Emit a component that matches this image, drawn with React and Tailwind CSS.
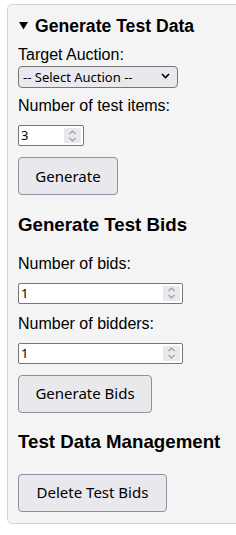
import { useState } from "react";

const sans = "font-['Liberation_Sans',Arial,sans-serif]";
const ui = "font-['Noto_Sans','Open_Sans',sans-serif]";

function NumberField({ value, onChange, width }) {
  return (
    <div
      className={`mt-[10px] flex h-[21px] items-stretch rounded-[2px] border border-[#767676] bg-white ${width}`}
    >
      <input
        type="text"
        value={value}
        onChange={(e) => onChange(e.target.value)}
        className={`${ui} min-w-0 flex-1 bg-transparent px-[2px] text-[13px] leading-[19px] text-black outline-none`}
      />
      {/* spinner */}
      <div className="my-[2px] mr-[2px] flex w-[17px] flex-col items-center justify-center bg-[#e9e9ed]">
        <svg width="9" height="14" viewBox="0 0 9 14" fill="none" stroke="#9a9aa6" strokeWidth="1.1">
          <path d="M1.5 5 L4.5 2 L7.5 5" />
          <path d="M1.5 9 L4.5 12 L7.5 9" />
        </svg>
      </div>
    </div>
  );
}

function Btn({ children, className = "" }) {
  return (
    <button
      className={`${ui} flex h-[38px] items-center justify-center whitespace-nowrap rounded-[4px] border border-[#8f8f9d] bg-[#e9e9ed] text-[15px] text-black ${className}`}
    >
      {children}
    </button>
  );
}

export default function App() {
  const [items, setItems] = useState("3");
  const [bids, setBids] = useState("1");
  const [bidders, setBidders] = useState("1");
  const [auction, setAuction] = useState("");

  return (
    <div className={`h-[535px] w-[236px] overflow-hidden bg-white pl-[7px] pt-[4px] ${sans}`}>
      <div className="w-[260px] rounded-[5px] border border-[#d6d6d6] bg-[#f4f4f4] pl-[10px] pt-[11px] pb-[11px] text-black">
        {/* Generate Test Data */}
        <div className="flex items-center text-[17.6px] font-bold leading-[20px]">
          <svg width="9" height="8" viewBox="0 0 9 8" className="ml-[1px] mr-[7px]">
            <polygon points="0,0 9,0 4.5,7.5" fill="#000" />
          </svg>
          Generate Test Data
        </div>

        <label className="mt-[10px] block text-[16px] leading-[18px]">Target Auction:</label>
        <div className="relative mt-[1px] h-[22px] w-[160px]">
          <select
            value={auction}
            onChange={(e) => setAuction(e.target.value)}
            className={`${ui} h-full w-full appearance-none rounded-[4px] border border-[#767676] bg-[#e9e9ed] pl-[4px] text-[13px] leading-[20px] text-black outline-none`}
          >
            <option value="">-- Select Auction --</option>
          </select>
          <svg
            width="9"
            height="6"
            viewBox="0 0 9 6"
            className="pointer-events-none absolute right-[8px] top-[8px]"
            fill="none"
            stroke="#000"
            strokeWidth="1.6"
          >
            <path d="M1 1 L4.5 4.5 L8 1" />
          </svg>
        </div>

        <label className="mt-[10px] block text-[16px] leading-[18px]">Number of test items:</label>
        <NumberField value={items} onChange={setItems} width="w-[66px]" />
        <Btn className="mt-[11px] w-[100px]">Generate</Btn>

        {/* Generate Test Bids */}
        <h3 className="mt-[18.5px] text-[18.72px] font-bold leading-[22px]">Generate Test Bids</h3>
        <label className="mt-[19px] block text-[16px] leading-[18px]">Number of bids:</label>
        <NumberField value={bids} onChange={setBids} width="w-[165px]" />
        <label className="mt-[11px] block text-[16px] leading-[18px]">Number of bidders:</label>
        <NumberField value={bidders} onChange={setBidders} width="w-[165px]" />
        <Btn className="mt-[11px] w-[134px]">Generate Bids</Btn>

        {/* Test Data Management */}
        <h3 className="mt-[18.5px] text-[18.72px] font-bold leading-[22px]">Test Data Management</h3>
        <Btn className="mt-[20.5px] w-[149px]">Delete Test Bids</Btn>
      </div>
    </div>
  );
}
